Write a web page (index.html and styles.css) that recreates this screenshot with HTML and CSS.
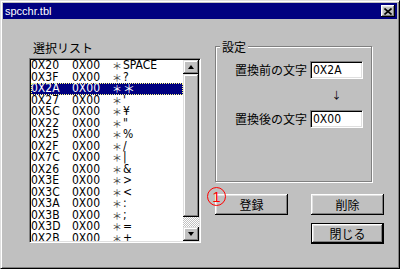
FILE: index.html
```html
<!DOCTYPE html>
<html lang="ja">
<head>
<meta charset="utf-8">
<title>spcchr.tbl</title>
<link rel="stylesheet" href="styles.css">
</head>
<body>
<div class="window">
  <div class="titlebar">
    <span class="title">spcchr.tbl</span>
    <button class="close" aria-label="close"><svg width="8" height="7" viewBox="0 0 8 7"><path d="M0.5 0.5 L7.5 6.5 M7.5 0.5 L0.5 6.5" stroke="#000" stroke-width="1.6" fill="none"/></svg></button>
  </div>
  <div class="body">
    <div class="left">
      <div class="list-label">選択リスト</div>
      <div class="listbox">
        <div class="rows">
          <div class="row"><span>0X20</span><span>0X00</span><span class="star">＊</span><span>SPACE</span></div>
          <div class="row"><span>0X3F</span><span>0X00</span><span class="star">＊</span><span>?</span></div>
          <div class="row selected"><span>0X2A</span><span>0X00</span><span class="star">＊</span><span class="star big">＊</span></div>
          <div class="row"><span>0X27</span><span>0X00</span><span class="star">＊</span><span>'</span></div>
          <div class="row"><span>0X5C</span><span>0X00</span><span class="star">＊</span><span>¥</span></div>
          <div class="row"><span>0X22</span><span>0X00</span><span class="star">＊</span><span>"</span></div>
          <div class="row"><span>0X25</span><span>0X00</span><span class="star">＊</span><span>%</span></div>
          <div class="row"><span>0X2F</span><span>0X00</span><span class="star">＊</span><span>/</span></div>
          <div class="row"><span>0X7C</span><span>0X00</span><span class="star">＊</span><span>|</span></div>
          <div class="row"><span>0X26</span><span>0X00</span><span class="star">＊</span><span>&amp;</span></div>
          <div class="row"><span>0X3E</span><span>0X00</span><span class="star">＊</span><span>&gt;</span></div>
          <div class="row"><span>0X3C</span><span>0X00</span><span class="star">＊</span><span>&lt;</span></div>
          <div class="row"><span>0X3A</span><span>0X00</span><span class="star">＊</span><span>:</span></div>
          <div class="row"><span>0X3B</span><span>0X00</span><span class="star">＊</span><span>;</span></div>
          <div class="row"><span>0X3D</span><span>0X00</span><span class="star">＊</span><span>=</span></div>
          <div class="row"><span>0X2B</span><span>0X00</span><span class="star">＊</span><span>+</span></div>
        </div>
        <div class="scrollbar">
          <div class="sb-btn"><span class="tri-up"></span></div>
          <div class="sb-thumb"></div>
          <div class="sb-track"></div>
          <div class="sb-btn"><span class="tri-down"></span></div>
        </div>
      </div>
    </div>
    <div class="right">
      <div class="group">
        <span class="group-title">設定</span>
        <span class="field-label">置換前の文字</span>
        <div class="input">0X2A</div>
        <span class="arrow">↓</span>
        <span class="field-label">置換後の文字</span>
        <div class="input">0X00</div>
      </div>
      <div class="buttons">
        <div class="btn-wrap">
          <button class="btn">登録</button>
          <span class="badge">1</span>
        </div>
        <button class="btn">削除</button>
        <button class="btn default">閉じる</button>
      </div>
    </div>
  </div>
</div>
</body>
</html>
```
FILE: styles.css
```css
* { box-sizing: border-box; }
html, body { margin: 0; padding: 0; }
body {
  width: 400px;
  height: 269px;
  overflow: hidden;
  background: #c0c0c0;
  font-family: "Noto Sans CJK JP", sans-serif;
  font-size: 12px;
  color: #000;
}
.window {
  width: 400px;
  height: 269px;
  display: flex;
  flex-direction: column;
  border: 1px solid;
  border-color: #dfdfdf #000 #000 #dfdfdf;
  box-shadow: inset 1px 1px #fff, inset -1px -1px #808080;
  padding: 2px;
  background: #c0c0c0;
}
.titlebar {
  flex: none;
  height: 16px;
  background: #000080;
  display: flex;
  align-items: center;
  justify-content: space-between;
  padding: 0 2px;
}
.title {
  color: #fff;
  font-family: "Liberation Sans", sans-serif;
  font-size: 11px;
  line-height: 16px;
}
.close {
  width: 14px;
  height: 12px;
  border: 0;
  padding: 0;
  background: #c0c0c0;
  box-shadow: inset -1px -1px #000, inset 1px 1px #fff, inset -2px -2px #808080, inset 2px 2px #dfdfdf;
  display: flex;
  align-items: center;
  justify-content: center;
}
.close svg { display: block; }
.body {
  flex: 1;
  display: grid;
  grid-template-columns: 172px 1fr;
  column-gap: 14px;
  padding-left: 26px;
  align-items: start;
}
.left { padding-top: 22px; }
.list-label {
  height: 14px;
  line-height: 14px;
  margin-bottom: 3px;
  padding-left: 4px;
}
.listbox {
  width: 172px;
  height: 185px;
  display: flex;
  background: #fff;
  border: 1px solid;
  border-color: #808080 #fff #fff #808080;
  padding: 1px;
  box-shadow: inset 1px 1px #000, inset -1px -1px #dfdfdf;
}
.rows {
  width: 152px;
  height: 181px;
  overflow: hidden;
  font-family: "Liberation Sans Narrow", "DejaVu Sans Condensed", "Liberation Sans", sans-serif;
  font-stretch: condensed;
  font-size: 12px;
}
.row {
  display: grid;
  grid-template-columns: 41px 40px 11px 1fr;
  height: 11.5px;
  line-height: 11.5px;
  white-space: nowrap;
}
.row > span { overflow: visible; }
.row.selected {
  background: #000080;
  color: #fff;
  outline: 1px dotted #ffff80;
  outline-offset: -1px;
}
.star {
  font-family: "Noto Sans CJK JP", sans-serif;
  font-size: 10px;
  color: #444;
}
.row.selected .star { color: #fff; }
.star.big { font-size: 12px; }
.scrollbar {
  width: 16px;
  height: 181px;
  display: flex;
  flex-direction: column;
  background: #c0c0c0;
}
.sb-btn, .sb-thumb {
  background: #c0c0c0;
  box-shadow: inset -1px -1px #000, inset 1px 1px #dfdfdf, inset -2px -2px #808080, inset 2px 2px #fff;
}
.sb-btn {
  height: 14px;
  flex: none;
  display: flex;
  align-items: center;
  justify-content: center;
}
.sb-thumb { flex: 1; }
.sb-track {
  height: 10px;
  flex: none;
  background: repeating-conic-gradient(#c0c0c0 0 25%, #fff 0 50%) 0 0 / 2px 2px;
}
.tri-up, .tri-down {
  width: 0;
  height: 0;
  border-left: 3.5px solid transparent;
  border-right: 3.5px solid transparent;
}
.tri-up { border-bottom: 4px solid #000; }
.tri-down { border-top: 4px solid #000; }
.right {
  display: flex;
  flex-direction: column;
  align-items: flex-start;
}
.group {
  position: relative;
  margin-top: 27px;
  width: 157px;
  height: 136px;
  border: 1px solid #808080;
  box-shadow: 1px 1px #fff, inset 1px 1px #fff;
  display: grid;
  grid-template-columns: 75px 53px;
  grid-template-rows: 18px 31px 18px;
  align-items: center;
  align-content: start;
  padding: 14px 0 0 19px;
}
.group-title {
  position: absolute;
  top: -7px;
  left: 4px;
  padding: 0 2px;
  background: #c0c0c0;
  line-height: 13px;
}
.field-label {
  line-height: 14px;
  white-space: nowrap;
}
.input {
  width: 53px;
  height: 18px;
  background: #fff;
  border: 1px solid;
  border-color: #808080 #fff #fff #808080;
  padding: 1px 1px 1px 2px;
  box-shadow: inset 1px 1px #000, inset -1px -1px #dfdfdf;
  font-family: "Liberation Sans Narrow", "DejaVu Sans Condensed", "Liberation Sans", sans-serif;
  font-stretch: condensed;
  font-size: 12px;
  line-height: 15px;
}
.arrow {
  grid-column: 2;
  text-align: center;
  font-size: 10px;
  line-height: 31px;
}
.buttons {
  margin-top: 12px;
  display: grid;
  grid-template-columns: 73px 73px;
  column-gap: 23px;
  row-gap: 8px;
}
.btn-wrap { position: relative; }
.btn {
  width: 73px;
  height: 21px;
  border: 0;
  padding: 0;
  background: #c0c0c0;
  font-family: "Noto Sans CJK JP", sans-serif;
  font-size: 12px;
  color: #000;
  box-shadow: inset -1px -1px #000, inset 1px 1px #fff, inset -2px -2px #808080, inset 2px 2px #dfdfdf;
  display: block;
}
.btn.default {
  grid-column: 2;
  border: 1px solid #000;
}
.badge {
  position: absolute;
  left: -8px;
  top: -7px;
  width: 19px;
  height: 19px;
  border: 1px solid #f00;
  border-radius: 50%;
  color: #f00;
  font-family: "Liberation Sans", sans-serif;
  font-size: 15px;
  line-height: 17px;
  text-align: center;
}
```
